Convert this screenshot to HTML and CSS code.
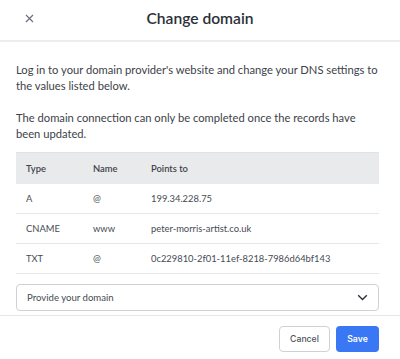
FILE: index.html
```html
<!DOCTYPE html>
<html>
<head>
<meta charset="utf-8">
<link rel="stylesheet" href="styles.css">
</head>
<body>
<div class="dialog">
  <header class="header">
    <button class="close" aria-label="Close">
      <svg width="9" height="9" viewBox="0 0 9 9"><path d="M1 1L8 8M8 1L1 8" stroke="#6b7079" stroke-width="1.2" fill="none"/></svg>
    </button>
    <h1 class="title">Change domain</h1>
  </header>
  <main class="body">
    <p class="text">Log in to your domain provider's website and change your DNS settings to the values listed below.</p>
    <p class="text">The domain connection can only be completed once the records have been updated.</p>
    <table class="records">
      <thead>
        <tr><th class="c-type">Type</th><th class="c-name">Name</th><th>Points to</th></tr>
      </thead>
      <tbody>
        <tr><td>A</td><td>@</td><td>199.34.228.75</td></tr>
        <tr><td>CNAME</td><td>www</td><td>peter-morris-artist.co.uk</td></tr>
        <tr><td>TXT</td><td>@</td><td>0c229810-2f01-11ef-8218-7986d64bf143</td></tr>
      </tbody>
    </table>
    <div class="select">
      <span>Provide your domain</span>
      <svg width="11" height="7" viewBox="0 0 11 7"><path d="M1.2 1.2L5.5 5.5L9.8 1.2" stroke="#2b3038" stroke-width="1.4" fill="none"/></svg>
    </div>
  </main>
  <footer class="footer">
    <button class="btn btn-cancel">Cancel</button>
    <button class="btn btn-save">Save</button>
  </footer>
</div>
</body>
</html>
```
FILE: styles.css
```css
* { box-sizing: border-box; }
html, body { margin: 0; padding: 0; background: #fff; }
body { font-family: Lato, "Open Sans", sans-serif; color: #3a3f47; }
.dialog { width: 400px; height: 359px; display: flex; flex-direction: column; }
.header {
  height: 42px;
  border-bottom: 2px solid #ececec;
  display: flex;
  align-items: center;
  justify-content: center;
  position: relative;
}
.close {
  position: absolute;
  left: 20px;
  top: 9px;
  width: 18px;
  height: 18px;
  border: 0;
  background: none;
  padding: 0;
  display: flex;
  align-items: center;
  justify-content: center;
}
.title {
  margin: 0 0 4px 0;
  font-size: 15.6px;
  font-weight: 600;
  color: #2b3038;
}
.body { padding: 20px 21px 0 16px; }
.text {
  margin: 0 0 16px 0;
  font-size: 11.2px;
  line-height: 16px;
  color: #3d424a;
}
.records {
  width: 363px;
  table-layout: fixed;
  border-collapse: collapse;
  font-size: 9.4px;
  color: #464b53;
  margin-top: -6px;
}
.records th {
  background: #e9eaeb;
  border-top: 1px solid #e1e2e4;
  text-align: left;
  font-weight: 600;
  height: 31px;
  padding: 0 0 0 10px;
  color: #3f444c;
}
.records td {
  height: 30px;
  padding: 0 0 0 10px;
  border-bottom: 1px solid #e6e7e8;
  white-space: nowrap;
}
.records .c-type { width: 67px; }
.records .c-name { width: 58px; }
.select {
  margin-top: 10px;
  height: 27px;
  border: 1px solid #cfd1d4;
  border-radius: 4px;
  display: flex;
  align-items: center;
  justify-content: space-between;
  padding: 0 10px 0 10px;
  font-size: 9.6px;
  color: #464b53;
}
.footer {
  margin-top: 4px;
  border-top: 1px solid #e6e7e8;
  display: flex;
  justify-content: flex-end;
  gap: 6px;
  padding: 10px 21px 0 0;
}
.btn {
  height: 26px;
  border-radius: 4px;
  font-family: Inter, sans-serif;
  font-size: 8.7px;
  font-weight: 500;
  padding: 0;
}
.btn-cancel {
  width: 51px;
  border: 1px solid #cfd1d4;
  background: #fff;
  color: #4f545c;
}
.btn-save {
  width: 43px;
  border: 0;
  background: #3a77f5;
  color: #fff;
  font-weight: 600;
}
```
